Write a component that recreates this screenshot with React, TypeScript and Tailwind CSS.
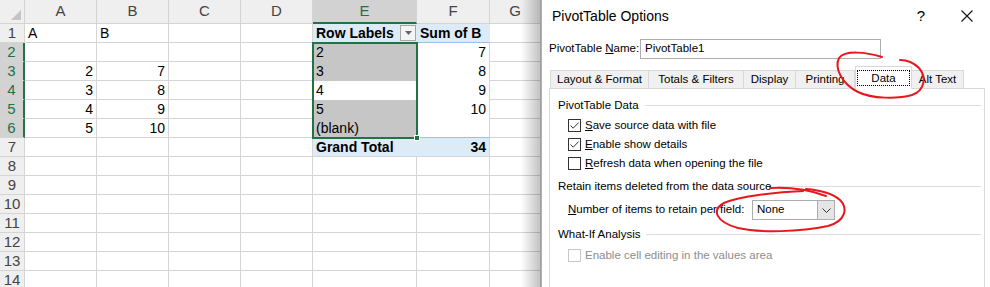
import React from 'react';

const COLS = ['A', 'B', 'C', 'D', 'E', 'F', 'G'];
const WIDTHS = ['w-[25px]', 'w-[72px]', 'w-[72px]', 'w-[72px]', 'w-[72px]', 'w-[104px]', 'w-[73px]', 'w-[51px]'];
const ROWS = Array.from({ length: 14 }, (_, i) => i + 1);

// plain values outside the pivot
const values: Record<string, string> = {
  '1-1': 'A',
  '1-2': 'B',
  '3-1': '2',
  '3-2': '7',
  '4-1': '3',
  '4-2': '8',
  '5-1': '4',
  '5-2': '9',
  '6-1': '5',
  '6-2': '10',
};

const pivotRows: Record<number, { label: string; sum: string; fill: string }> = {
  2: { label: '2', sum: '7', fill: 'bg-[#c6c6c6]' },
  3: { label: '3', sum: '8', fill: 'bg-[#c6c6c6]' },
  4: { label: '4', sum: '9', fill: 'bg-white' },
  5: { label: '5', sum: '10', fill: 'bg-[#c6c6c6]' },
  6: { label: '(blank)', sum: '', fill: 'bg-[#c6c6c6]' },
};

const grid = 'border-r border-b border-[#d4d4d4]';
const base = 'h-full flex items-center overflow-hidden whitespace-nowrap px-[3px]';

const SheetCell: React.FC<{ r: number; c: number }> = ({ r, c }) => {
  const w = WIDTHS[c];

  // column E (pivot labels)
  if (c === 5) {
    if (r === 1) {
      return (
        <div className={`${w} ${base} justify-between bg-[#ddebf7] border-b border-[#9bc2e6] font-bold pr-[1px]`}>
          <span>Row Labels</span>
          <span className="w-[16px] h-[16px] bg-[#f4f4f4] border border-[#a6a6a6] flex items-center justify-center">
            <svg width="7" height="4" viewBox="0 0 7 4"><path d="M0 0h7L3.5 4z" fill="#666" /></svg>
          </span>
        </div>
      );
    }
    if (pivotRows[r]) {
      return <div className={`${w} ${base} ${pivotRows[r].fill}`}>{pivotRows[r].label}</div>;
    }
    if (r === 7) {
      return <div className={`${w} ${base} bg-[#ddebf7] border-b border-[#d4d4d4] font-bold`}>Grand Total</div>;
    }
  }

  // column F (pivot values)
  if (c === 6) {
    if (r === 1) {
      return <div className={`${w} ${base} bg-[#ddebf7] border-b border-[#9bc2e6] font-bold`}>Sum of B</div>;
    }
    if (pivotRows[r]) {
      const bottom = r === 6 ? 'border-b border-b-[#9bc2e6]' : '';
      return (
        <div className={`${w} ${base} justify-end border-r border-[#d4d4d4] ${bottom}`}>{pivotRows[r].sum}</div>
      );
    }
    if (r === 7) {
      return <div className={`${w} ${base} justify-end bg-[#ddebf7] ${grid} font-bold`}>34</div>;
    }
  }

  const v = values[`${r}-${c}`];
  const right = v && r > 1 ? 'justify-end' : '';
  return <div className={`${w} ${base} ${grid} ${right}`}>{v}</div>;
};

const Sheet: React.FC = () => (
  <div className="relative w-[541px] h-full overflow-hidden bg-white text-[14px] text-black font-['Liberation_Sans',Arial,sans-serif]">
    {/* column headers */}
    <div className="flex h-[24px]">
      <div className={`${WIDTHS[0]} h-full bg-[#efefef] border-r border-b border-[#d4d4d4] relative`}>
        <svg className="absolute right-[3px] bottom-[3px]" width="10" height="10" viewBox="0 0 10 10">
          <path d="M10 0V10H0z" fill="#c4c4c4" />
        </svg>
      </div>
      {COLS.map((col, i) => {
        const sel = col === 'E';
        return (
          <div
            key={col}
            className={`${WIDTHS[i + 1]} h-full flex items-center justify-center text-[15px] ${
              sel
                ? 'bg-[#d2d2d2] text-[#217346] border-r border-r-[#d4d4d4] border-b-2 border-b-[#217346]'
                : 'bg-[#efefef] text-[#444] border-r border-b border-[#d4d4d4]'
            }`}
          >
            {col}
          </div>
        );
      })}
    </div>

    {ROWS.map((r) => {
      const sel = r >= 2 && r <= 6;
      return (
        <div key={r} className="flex h-[19px]">
          <div
            className={`${WIDTHS[0]} h-full flex items-center justify-center text-[15px] ${
              sel
                ? 'bg-[#d2d2d2] text-[#217346] border-b border-b-[#d4d4d4] border-r-2 border-r-[#217346]'
                : 'bg-[#efefef] text-[#444] border-r border-b border-[#d4d4d4]'
            }`}
          >
            {r}
          </div>
          {COLS.map((_, i) => (
            <SheetCell key={i} r={r} c={i + 1} />
          ))}
        </div>
      );
    })}

    {/* selection E2:E6 */}
    <div className="absolute left-[312px] top-[42px] w-[106px] h-[97px] border-2 border-[#217346]" />
    <div className="absolute left-[414px] top-[135px] w-[6px] h-[6px] bg-[#217346] border border-white" />

    {/* dialog shadow */}
    <div className="absolute right-0 top-0 bottom-0 w-[20px] bg-linear-to-r from-transparent to-black/25" />
  </div>
);

const Check: React.FC<{ checked?: boolean; disabled?: boolean }> = ({ checked, disabled }) => (
  <span
    className={`shrink-0 w-[13px] h-[13px] border bg-white flex items-center justify-center ${
      disabled ? 'border-[#c8c8c8]' : 'border-[#333]'
    }`}
  >
    {checked && (
      <svg width="11" height="11" viewBox="0 0 11 11">
        <path d="M1.5 5.5L4.2 8.2L9.6 2.6" fill="none" stroke="#333" strokeWidth="1" />
      </svg>
    )}
  </span>
);

const GroupTitle: React.FC<{ children: React.ReactNode; className?: string }> = ({ children, className = '' }) => (
  <div className={`h-[19px] flex items-center gap-[6px] pl-[8px] pr-[3px] ${className}`}>
    <span className="whitespace-nowrap">{children}</span>
    <span className="flex-1 h-px bg-[#dcdcdc]" />
  </div>
);

const tabs = [
  { label: 'Layout & Format', w: 'w-[99px]' },
  { label: 'Totals & Filters', w: 'w-[96px]' },
  { label: 'Display', w: 'w-[53px]' },
  { label: 'Printing', w: 'w-[60px]' },
  { label: 'Data', w: 'w-[57px]', active: true },
  { label: 'Alt Text', w: 'w-[53px]' },
];

const Dialog: React.FC = () => (
  <div className="flex-1 h-full bg-white border-l border-[#b0b0b0] text-[11.5px] text-black whitespace-nowrap font-['Liberation_Sans',Arial,sans-serif]">
    {/* title bar */}
    <div className="h-[32px] bg-white flex items-center pl-[10px]">
      <span className="text-[14px] flex-1">PivotTable Options</span>
      <span className="text-[15px] w-[46px] text-center">?</span>
      <span className="w-[46px] flex items-center justify-center">
        <svg width="12" height="12" viewBox="0 0 12 12">
          <path d="M0.5 0.5L11.5 11.5M11.5 0.5L0.5 11.5" stroke="#111" strokeWidth="1.1" />
        </svg>
      </span>
    </div>

    <div className="pl-[7px] pr-[5px] pt-[7px]">
      {/* name */}
      <div className="flex items-center h-[20px]">
        <span className="w-[91px]">
          PivotTable <span className="underline">N</span>ame:
        </span>
        <div className="w-[241px] h-[20px] bg-white border border-[#adadad] flex items-center pl-[4px]">PivotTable1</div>
      </div>

      {/* tabs */}
      <div className="flex items-end h-[22px] mt-[7px] pl-[1px]">
        {tabs.map((t) =>
          t.active ? (
            <div
              key={t.label}
              className={`${t.w} h-[23px] -mb-px relative z-10 bg-white border border-b-0 border-[#d9d9d9] flex items-center justify-center`}
            >
              <span className="border border-dotted border-black px-[13px] leading-[14px]">{t.label}</span>
            </div>
          ) : (
            <div
              key={t.label}
              className={`${t.w} h-[18px] bg-[#f0f0f0] border border-b-0 border-[#d9d9d9] -ml-px first:ml-0 flex items-center justify-center`}
            >
              {t.label}
            </div>
          )
        )}
      </div>

      {/* tab page */}
      <div className="h-[200px] bg-white border border-[#d9d9d9] pt-[7px]">
        <GroupTitle>PivotTable Data</GroupTitle>
        <div className="pl-[18px]">
          <div className="h-[19px] mt-px flex items-center gap-[4px]">
            <Check checked />
            <span>
              <span className="underline">S</span>ave source data with file
            </span>
          </div>
          <div className="h-[19px] flex items-center gap-[4px]">
            <Check checked />
            <span>
              <span className="underline">E</span>nable show details
            </span>
          </div>
          <div className="h-[19px] flex items-center gap-[4px]">
            <Check />
            <span>
              <span className="underline">R</span>efresh data when opening the file
            </span>
          </div>
        </div>

        <GroupTitle className="mt-[4px]">Retain items deleted from the data source</GroupTitle>
        <div className="h-[20px] mt-[4px] pl-[18px] flex items-center">
          <span className="w-[184px]">
            <span className="underline">N</span>umber of items to retain per field:
          </span>
          <div className="w-[83px] h-[20px] bg-white border border-[#adadad] flex items-center">
            <span className="flex-1 pl-[4px]">None</span>
            <span className="w-[17px] h-full bg-[#e5e5e5] border-l border-[#adadad] flex items-center justify-center">
              <svg width="9" height="5" viewBox="0 0 9 5">
                <path d="M0.5 0.5L4.5 4.5L8.5 0.5" fill="none" stroke="#333" strokeWidth="1" />
              </svg>
            </span>
          </div>
        </div>

        <GroupTitle className="mt-[5px]">What-If Analysis</GroupTitle>
        <div className="h-[19px] mt-[2px] pl-[18px] flex items-center gap-[4px] text-[#8d8d8d]">
          <Check disabled />
          <span>Enable cell editing in the values area</span>
        </div>
      </div>
    </div>
  </div>
);

export default function App() {
  return (
    <div className="relative w-[990px] h-[287px] flex overflow-hidden bg-white">
      <Sheet />
      <Dialog />

      {/* red annotation marks */}
      <svg className="absolute inset-0 pointer-events-none" width="990" height="287" viewBox="0 0 990 287">
        <g fill="none" stroke="#e8161d" strokeWidth="2" strokeLinecap="round">
          <path d="M882 57 C866 52 845 50 839 58 C834 68 842 84 858 92 C872 99 898 99 912 95 C926 90 926 76 919 68 C913 62 906 60 900 60" />
          <path d="M770 188 C792 187 810 190 826 196" />
          <path d="M803 191 C778 192 740 196 724 203 C711 210 716 222 738 228 C760 233 800 232 828 226 C846 221 848 208 840 200 C832 193 818 190 806 189" />
        </g>
      </svg>
    </div>
  );
}
